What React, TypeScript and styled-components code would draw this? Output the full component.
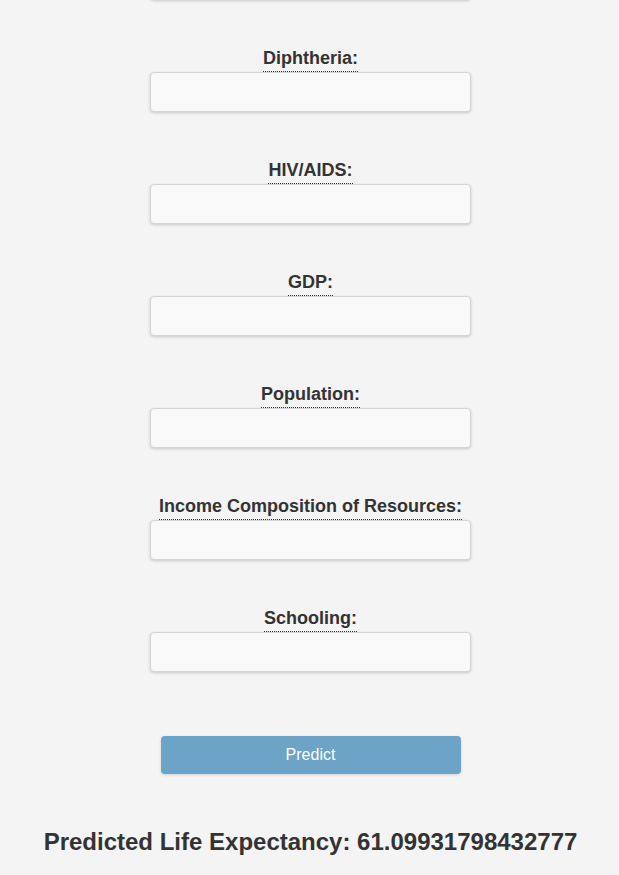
import styled, { createGlobalStyle } from "styled-components";

const fields = [
  "Diphtheria",
  "HIV/AIDS",
  "GDP",
  "Population",
  "Income Composition of Resources",
  "Schooling",
];

const GlobalStyle = createGlobalStyle`
  html, body {
    margin: 0;
    padding: 0;
    background: #f4f4f4;
    font-family: "Liberation Sans", Arial, sans-serif;
    color: #333;
  }
`;

const Page = styled.div`
  display: flex;
  flex-direction: column;
  align-items: center;
  padding-left: 2px;
  margin-top: -40px;
`;

const Form = styled.form`
  display: flex;
  flex-direction: column;
  align-items: center;
  gap: 47px;
`;

const Field = styled.div`
  display: flex;
  flex-direction: column;
  align-items: center;
`;

const Label = styled.abbr`
  display: inline-block;
  font-size: 18px;
  font-weight: bold;
  line-height: 22px;
  padding-bottom: 2px;
  border-bottom: 1px dotted #333;
  text-decoration: none;
  cursor: help;
`;

const Input = styled.input`
  box-sizing: border-box;
  width: 321px;
  height: 40px;
  background: #f9f9f9;
  border: 1px solid #d4d4d4;
  border-radius: 4px;
  box-shadow: 0 1px 3px rgba(0, 0, 0, 0.18);
  padding: 0 10px;
  font-size: 16px;
  outline: none;
`;

const Button = styled.button`
  margin-top: 17px;
  width: 300px;
  height: 38px;
  background: #6ca3c6;
  color: #fff;
  border: none;
  border-radius: 4px;
  box-shadow: 0 1px 3px rgba(0, 0, 0, 0.15);
  font-family: inherit;
  font-size: 16px;
  cursor: pointer;
`;

const Result = styled.h2`
  margin: 54px 0 0;
  font-size: 24px;
  font-weight: bold;
  line-height: 28px;
  text-align: center;
`;

export default function App() {
  return (
    <>
      <GlobalStyle />
      <Page>
        <Form onSubmit={(e) => e.preventDefault()}>
          {/* tail of the previous field, scrolled past */}
          <Field>
            <Input type="text" name="Total Expenditure" />
          </Field>
          {fields.map((name) => (
            <Field key={name}>
              <Label title={name}>{name}:</Label>
              <Input type="text" name={name} />
            </Field>
          ))}
          <Button type="submit">Predict</Button>
        </Form>
        <Result>Predicted Life Expectancy: 61.09931798432777</Result>
      </Page>
    </>
  );
}
